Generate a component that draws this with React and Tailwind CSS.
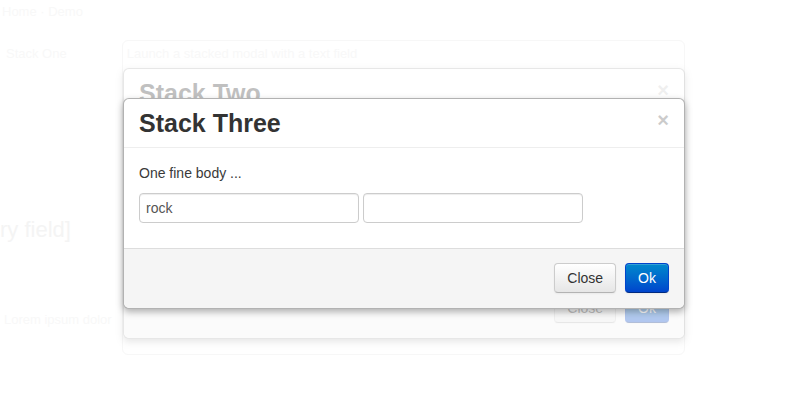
import React from "react";

function ModalBox({ title, children, footer }) {
  return (
    <div className="w-[562px] bg-white border border-[rgba(0,0,0,0.3)] rounded-[6px] shadow-[0_3px_7px_rgba(0,0,0,0.3)]">
      <div className="flex items-start justify-between px-[15px] py-[9px] border-b border-[#eee]">
        <h3 className="text-[25px] leading-[30px] font-bold text-[#333]">{title}</h3>
        <button className="mt-[2px] text-[20px] leading-[20px] font-bold text-black opacity-20">×</button>
      </div>
      {children}
      {footer}
    </div>
  );
}

function Footer() {
  return (
    <div className="flex justify-end gap-[9px] px-[15px] pt-[14px] pb-[15px] bg-[#f5f5f5] border-t border-[#ddd] rounded-b-[6px]">
      <button className="px-[12px] py-[4px] text-[14px] leading-[20px] text-[#333] rounded-[4px] border border-[#ccc] border-b-[#b3b3b3] bg-gradient-to-b from-white to-[#e6e6e6] shadow-[inset_0_1px_0_rgba(255,255,255,0.2),0_1px_2px_rgba(0,0,0,0.05)]">
        Close
      </button>
      <button className="px-[12px] py-[4px] text-[14px] leading-[20px] text-white rounded-[4px] border border-[#0044cc] border-b-[#002a80] bg-gradient-to-b from-[#0088cc] to-[#0044cc] shadow-[inset_0_1px_0_rgba(255,255,255,0.2),0_1px_2px_rgba(0,0,0,0.05)]">
        Ok
      </button>
    </div>
  );
}

export default function App() {
  return (
    <div
      className="relative w-[800px] h-[400px] bg-white overflow-hidden text-[#333]"
      style={{ fontFamily: '"Liberation Sans", Arial, sans-serif' }}
    >
      {/* faint page content behind the backdrop */}
      <div className="text-[#f8f8f8] text-[13px]">
        <div className="pt-[2px] pl-[2px]">Home · Demo</div>
        <div className="flex gap-[60px] pt-[22px] pl-[6px]">
          <span>Stack One</span>
          <span>Launch a stacked modal with a text field</span>
        </div>
        <div className="pt-[150px] text-[22px] text-[#f4f4f4]">ry field]</div>
        <div className="pt-[64px] pl-[4px]">Lorem ipsum dolor</div>
      </div>

      {/* stack one (very faint) */}
      <div className="absolute left-[122px] top-[40px] w-[563px] h-[315px] border border-[#f7f7f7] rounded-[6px]" />

      {/* stack two (faded) */}
      <div className="absolute left-[123px] top-[68px] opacity-30">
        <ModalBox title="Stack Two" footer={<Footer />}>
          <div className="h-[160px]" />
        </ModalBox>
      </div>

      {/* stack three */}
      <div className="absolute left-[123px] top-[98px]">
        <ModalBox title="Stack Three" footer={<Footer />}>
          <div className="p-[15px]">
            <p className="text-[14px] leading-[20px] mb-[10px] text-[#3a3a3a]">One fine body ...</p>
            <div className="flex gap-[4px] mb-[10px]">
              <input
                className="w-[220px] h-[30px] px-[6px] text-[14px] text-[#555] border border-[#ccc] rounded-[4px] shadow-[inset_0_1px_1px_rgba(0,0,0,0.075)] outline-none"
                defaultValue="rock"
              />
              <input className="w-[220px] h-[30px] px-[6px] text-[14px] text-[#555] border border-[#ccc] rounded-[4px] shadow-[inset_0_1px_1px_rgba(0,0,0,0.075)] outline-none" />
            </div>
          </div>
        </ModalBox>
      </div>
    </div>
  );
}
